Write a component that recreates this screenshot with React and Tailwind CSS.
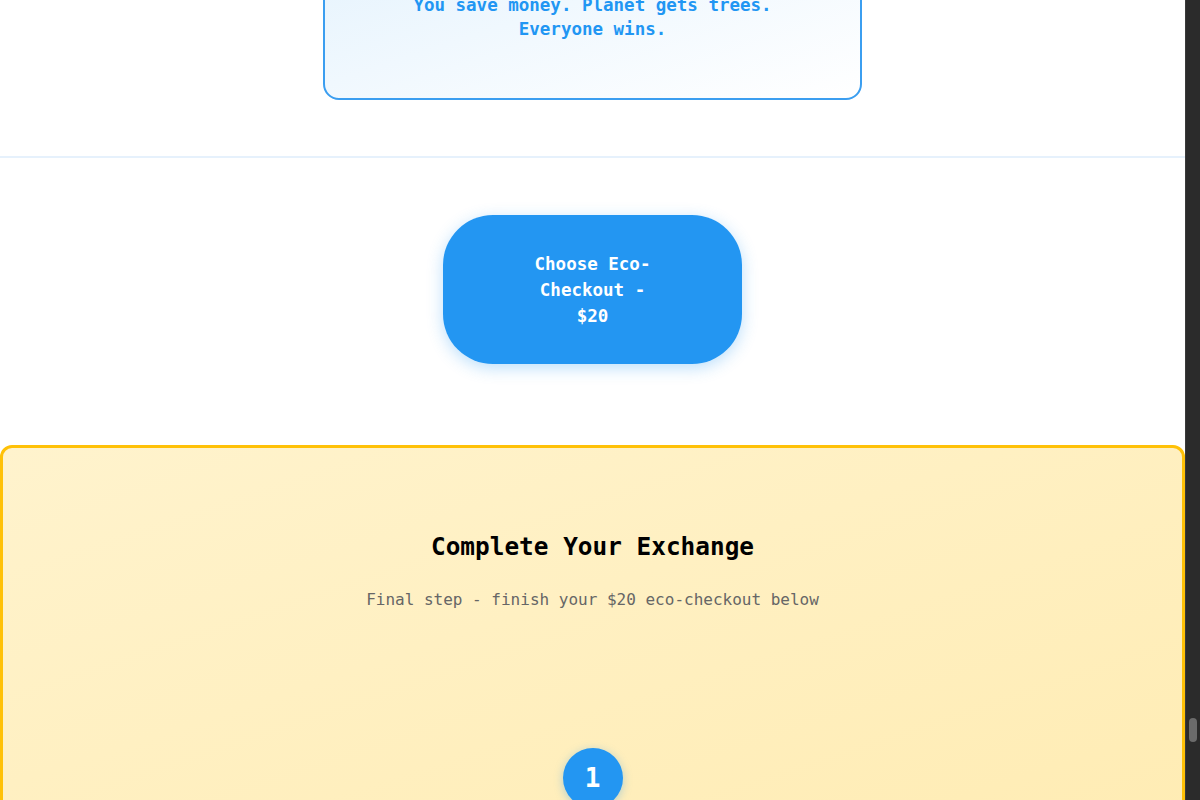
export default function App() {
  return (
    <div className="flex h-[800px] w-[1200px] overflow-hidden bg-white">
      {/* Page content (scrolled) */}
      <div className="h-[800px] w-[1185px] shrink-0 overflow-hidden font-['DejaVu_Sans_Mono',monospace]">
        {/* Savings card section */}
        <section className="border-b-2 border-[#e6f1fc] pb-[56px]">
          <div className="mx-auto -mt-[80px] w-[539px] rounded-[16px] border-2 border-[#3b9ef0] bg-gradient-to-br from-[#e3f2fd] to-white px-8 pt-[71px] pb-[57px] text-center">
            <p className="text-[17.5px] font-bold leading-[24px] text-[#2196f3]">
              You save money. Planet gets trees.
              <br />
              Everyone wins.
            </p>
          </div>
        </section>

        {/* CTA */}
        <section className="flex justify-center pt-[57px] pb-[81px]">
          <button className="flex h-[149px] w-[299px] flex-col items-center justify-center rounded-[50px] bg-[#2396f2] text-[17.5px] font-bold leading-[26px] text-white shadow-[0_4px_16px_rgba(33,150,243,0.3)]">
            <span>Choose Eco-</span>
            <span>Checkout -</span>
            <span>$20</span>
          </button>
        </section>

        {/* Exchange */}
        <section className="h-[400px] rounded-[12px] border-[3px] border-[#ffc107] bg-gradient-to-br from-[#fff3cd] to-[#ffecb3] pt-[84px] text-center">
          <h2 className="text-[24.4px] font-bold leading-[30px] text-black">Complete Your Exchange</h2>
          <p className="mt-[27px] text-[16px] leading-[22px] text-[#666666]">
            Final step - finish your $20 eco-checkout below
          </p>
          <div className="mt-[137px] flex justify-center">
            <div className="flex h-[60px] w-[60px] items-center justify-center rounded-full bg-[#2396f2] text-[26px] font-bold text-white shadow-[0_2px_10px_rgba(33,150,243,0.35)]">
              1
            </div>
          </div>
        </section>
      </div>

      {/* Scrollbar */}
      <div className="flex h-[800px] w-[15px] shrink-0 flex-col items-center border-l border-[#3a3a3a] bg-[#2b2b2b] pt-[718px]">
        <div className="h-[24px] w-[8px] rounded-full bg-[#6b6b6b]" />
      </div>
    </div>
  );
}
